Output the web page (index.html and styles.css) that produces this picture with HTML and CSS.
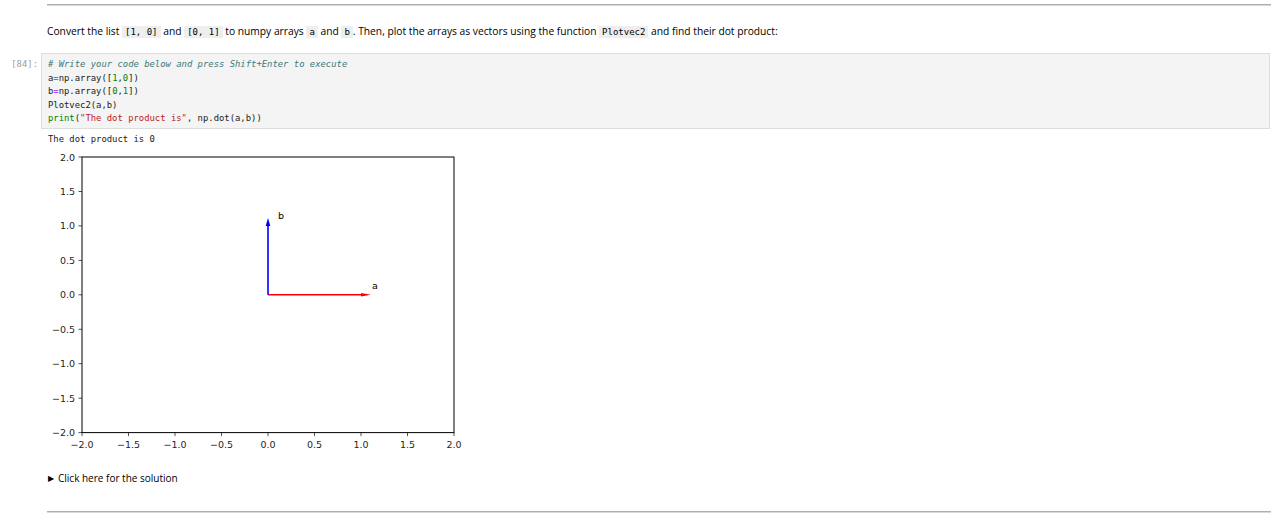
FILE: index.html
```html
<!DOCTYPE html>
<html>
<head>
<meta charset="utf-8">
<link rel="stylesheet" href="styles.css">
</head>
<body>
<div class="page">
  <div class="rule rule-top"></div>
  <p class="md">Convert the list <code>[1, 0]</code> and <code>[0, 1]</code> to numpy arrays <code>a</code> and <code>b</code>. Then, plot the arrays as vectors using the function <code>Plotvec2</code> and find their dot product:</p>
  <div class="cell">
    <div class="prompt">[84]:</div>
    <div class="code">
      <div class="ln"><span class="cm"># Write your code below and press Shift+Enter to execute</span></div>
      <div class="ln">a<span class="op">=</span>np.array([<span class="num">1</span>,<span class="num">0</span>])</div>
      <div class="ln">b<span class="op">=</span>np.array([<span class="num">0</span>,<span class="num">1</span>])</div>
      <div class="ln">Plotvec2(a,b)</div>
      <div class="ln"><span class="kw">print</span>(<span class="str">"The dot product is"</span>, np.dot(a,b))</div>
    </div>
  </div>
  <div class="output">
    <div class="stdout">The dot product is 0</div>
    <svg class="plot" width="440" height="312" viewBox="41 148 440 312" xmlns="http://www.w3.org/2000/svg">
      <g font-family="DejaVu Sans, sans-serif" font-size="9.5" fill="#262626">
        <g stroke="#262626" stroke-width="0.8">
          <line x1="78.5" y1="157" x2="82" y2="157"/>
          <line x1="78.5" y1="191.5" x2="82" y2="191.5"/>
          <line x1="78.5" y1="225.9" x2="82" y2="225.9"/>
          <line x1="78.5" y1="260.4" x2="82" y2="260.4"/>
          <line x1="78.5" y1="294.8" x2="82" y2="294.8"/>
          <line x1="78.5" y1="329.3" x2="82" y2="329.3"/>
          <line x1="78.5" y1="363.7" x2="82" y2="363.7"/>
          <line x1="78.5" y1="398.2" x2="82" y2="398.2"/>
          <line x1="78.5" y1="432.6" x2="82" y2="432.6"/>
          <line x1="82" y1="432.6" x2="82" y2="436.1"/>
          <line x1="128.5" y1="432.6" x2="128.5" y2="436.1"/>
          <line x1="175" y1="432.6" x2="175" y2="436.1"/>
          <line x1="221.5" y1="432.6" x2="221.5" y2="436.1"/>
          <line x1="268" y1="432.6" x2="268" y2="436.1"/>
          <line x1="314.5" y1="432.6" x2="314.5" y2="436.1"/>
          <line x1="361" y1="432.6" x2="361" y2="436.1"/>
          <line x1="407.5" y1="432.6" x2="407.5" y2="436.1"/>
          <line x1="454" y1="432.6" x2="454" y2="436.1"/>
        </g>
        <g text-anchor="end">
          <text x="75" y="160.5">2.0</text>
          <text x="75" y="195">1.5</text>
          <text x="75" y="229.4">1.0</text>
          <text x="75" y="263.9">0.5</text>
          <text x="75" y="298.3">0.0</text>
          <text x="75" y="332.8">−0.5</text>
          <text x="75" y="367.2">−1.0</text>
          <text x="75" y="401.7">−1.5</text>
          <text x="75" y="436.1">−2.0</text>
        </g>
        <g text-anchor="middle">
          <text x="82" y="447.5">−2.0</text>
          <text x="128.5" y="447.5">−1.5</text>
          <text x="175" y="447.5">−1.0</text>
          <text x="221.5" y="447.5">−0.5</text>
          <text x="268" y="447.5">0.0</text>
          <text x="314.5" y="447.5">0.5</text>
          <text x="361" y="447.5">1.0</text>
          <text x="407.5" y="447.5">1.5</text>
          <text x="454" y="447.5">2.0</text>
        </g>
        <line x1="268" y1="294.8" x2="362" y2="294.8" stroke="#ff0000" stroke-width="1.6"/>
        <polygon points="361,293 371,294.8 361,296.6" fill="#ff0000"/>
        <line x1="268" y1="294.8" x2="268" y2="225" stroke="#0000ff" stroke-width="1.6"/>
        <polygon points="265.7,226 268,218 270.3,226" fill="#0000ff"/>
        <text x="372" y="289" fill="#000">a</text>
        <text x="278" y="219" fill="#000">b</text>
        <rect x="82" y="157" width="372" height="275.6" fill="none" stroke="#000" stroke-width="1"/>
      </g>
    </svg>
  </div>
  <div class="solution"><span class="tri">▶</span>Click here for the solution</div>
  <div class="rule rule-bottom"></div>
</div>
</body>
</html>
```

FILE: styles.css
```css
html, body {
  margin: 0;
  padding: 0;
  background: #fff;
}
.page {
  width: 1271px;
  height: 522px;
  overflow: hidden;
  font-family: "Open Sans", "Noto Sans", sans-serif;
  color: #000;
}
.rule {
  height: 1px;
  border-top: 1px solid #b0b0b0;
  background: #d8d8d8;
  margin-left: 47px;
}
.rule-top {
  margin-top: 4px;
}
.md {
  margin: 17px 0 0 47px;
  font-size: 10.25px;
  line-height: 16px;
  letter-spacing: 0;
  white-space: nowrap;
}
.md code {
  font-family: "DejaVu Sans Mono", monospace;
  font-size: 9px;
  background: #eeeeee;
  padding: 1px 3px;
}
.cell {
  display: flex;
  margin-top: 13px;
}
.prompt {
  width: 41px;
  flex: none;
  box-sizing: border-box;
  padding: 5px 3px 0 0;
  text-align: right;
  font-family: "DejaVu Sans Mono", monospace;
  font-size: 8.9px;
  line-height: 13.6px;
  color: #9e9e9e;
}
.code {
  flex: 1;
  margin: 0 1px 0 0;
  box-sizing: border-box;
  height: 76px;
  padding: 4px 6px;
  background: #f4f4f4;
  border: 1px solid #dddddd;
  font-family: "DejaVu Sans Mono", monospace;
  font-size: 8.9px;
  color: #212121;
}
.ln {
  height: 13.6px;
  line-height: 13.6px;
  white-space: pre;
}
.cm { font-style: italic; color: #3d7a7a; }
.op { color: #aa22ff; }
.num { color: #008000; }
.kw { color: #008000; }
.str { color: #ba2121; }
.output {
  display: flex;
  flex-direction: column;
}
.stdout {
  margin: 3px 0 0 48px;
  font-family: "DejaVu Sans Mono", monospace;
  font-size: 8.9px;
  line-height: 14px;
  color: #212121;
  white-space: pre;
}
.plot {
  display: block;
  margin: 2px 0 0 41px;
}
.solution {
  margin: 11px 0 0 48px;
  font-size: 10px;
  line-height: 14px;
  display: flex;
  align-items: center;
}
.tri {
  font-size: 8px;
  margin-right: 4px;
}
.rule-bottom {
  margin-top: 26px;
}
```
